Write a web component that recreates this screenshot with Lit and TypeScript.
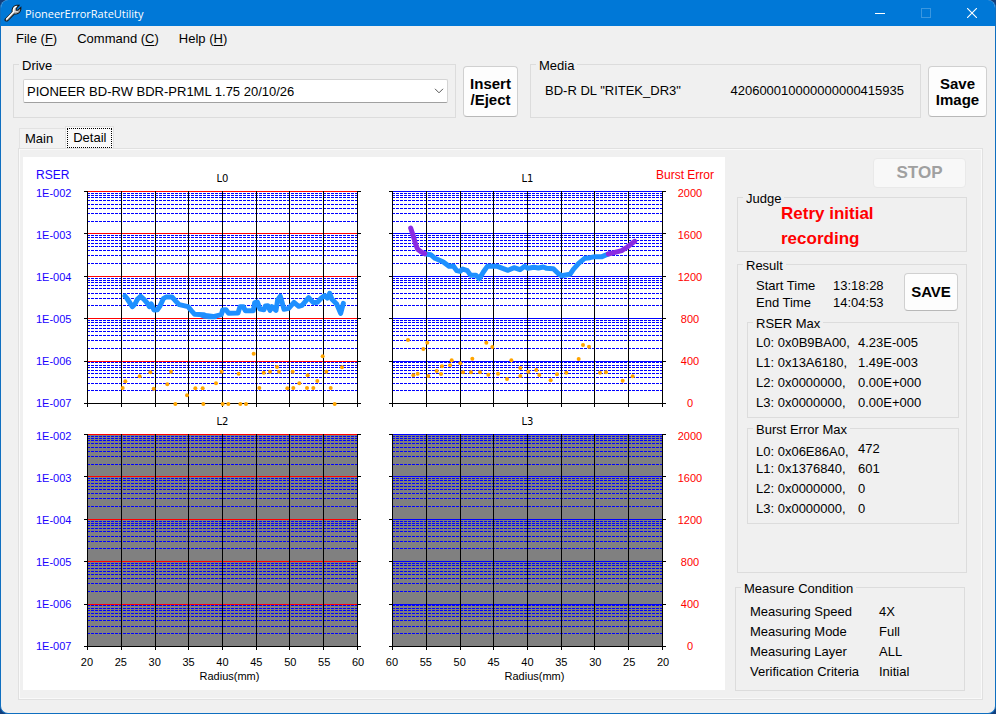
import { LitElement, html, svg, css } from "lit";
import { customElement, property } from "lit/decorators.js";

type Point = [number, number];

interface Trace {
  color: string;
  points: Point[];
}

/* Samples are recorded in thirds of a pixel; dx moves a block of samples
   from its own origin to the chart's origin. */
const block = (dx: number, samples: Point[]): Point[] =>
  samples.map(([x, y]) => [(x + dx) / 3, (y - 108) / 3]);

const BLUE = "#1e90ff";
const VIOLET = "#8a2be2";

const L0_TRACES: Trace[] = [
  {
    color: BLUE,
    points: [
      ...block(-192, [
        [315, 438], [320, 444], [328, 456], [337, 470], [345, 462], [352, 448], [362, 439], [372, 448],
        [384, 462], [388, 470], [394, 462], [402, 480], [412, 479], [420, 468], [430, 446], [438, 441],
        [456, 441], [466, 452], [478, 464], [504, 470], [514, 482], [524, 493], [550, 494], [565, 500],
        [585, 500],
      ]),
      ...block(348, [
        [0, 494], [14, 499], [40, 500], [64, 494], [68, 480], [78, 479], [86, 490], [114, 489], [120, 470],
        [130, 470], [136, 482], [160, 482], [164, 458], [172, 456], [180, 477], [192, 479], [196, 468],
        [204, 467], [210, 481], [216, 470], [228, 481], [233, 450], [241, 439], [246, 456], [252, 478],
        [266, 475], [282, 457], [296, 469], [306, 466], [326, 443], [340, 458], [352, 457], [364, 444],
        [374, 437], [382, 444], [389, 430], [396, 448], [410, 462], [422, 490], [430, 460],
      ]),
    ],
  },
];

const L0_DOTS: Point[] = [
  ...block(-192, [
    [308, 714], [316, 694], [359, 679], [391, 667], [401, 716], [442, 703], [453, 665], [466, 762],
    [501, 736], [526, 715], [548, 715], [550, 762], [588, 700], [605, 665],
  ]),
  ...block(348, [
    [68, 762], [85, 762], [116, 671], [121, 762], [138, 762], [161, 611], [178, 714], [191, 668],
    [210, 665], [231, 651], [237, 665], [262, 715], [280, 714], [278, 665], [298, 700], [321, 714],
    [323, 676], [340, 714], [352, 693], [368, 619], [379, 665], [392, 714], [404, 762], [426, 652],
  ]),
];

const L1_TRACES: Trace[] = [
  {
    color: BLUE,
    points: [
      ...block(-27, [
        [134, 311], [152, 314], [165, 325], [190, 336], [207, 349], [220, 348], [230, 362], [240, 364],
        [248, 357], [262, 362], [272, 376], [288, 376], [298, 386], [310, 366], [322, 349], [352, 349],
        [384, 361], [402, 353], [420, 359], [434, 349], [444, 355], [462, 352], [475, 354], [490, 351],
        [500, 355],
      ]),
      ...block(453, [
        [40, 356], [54, 370], [64, 377], [90, 373], [100, 358], [116, 340], [134, 325], [150, 323],
        [165, 320], [186, 320], [205, 312],
      ]),
    ],
  },
  {
    color: VIOLET,
    points: block(-27, [[92, 234], [100, 258], [106, 280], [113, 298], [124, 306], [134, 311]]),
  },
  {
    color: VIOLET,
    points: block(453, [[205, 312], [225, 307], [245, 302], [262, 291], [284, 274]]),
  },
];

const L1_DOTS: Point[] = [
  ...block(-27, [
    [84, 570], [142, 578], [130, 597], [100, 676], [113, 671], [145, 678], [170, 663], [183, 672],
    [186, 649], [210, 646], [215, 631], [241, 640], [249, 667], [273, 667], [277, 626], [300, 667],
    [319, 578], [337, 591], [325, 674], [354, 671], [381, 687], [394, 631], [421, 654], [421, 678],
    [445, 665], [469, 660], [478, 675], [512, 691], [531, 673],
  ]),
  ...block(453, [
    [79, 668], [116, 627], [129, 585], [147, 590], [180, 668], [198, 667], [248, 692], [278, 679],
  ]),
];

const RSER_SCALE = ["1E-002", "1E-003", "1E-004", "1E-005", "1E-006", "1E-007"];
const BURST_SCALE = ["2000", "1600", "1200", "800", "400", "0"];
const RADII = [20, 25, 30, 35, 40, 45, 50, 55, 60];

const RSER_MAX = [
  ["L0: 0x0B9BA00,", "4.23E-005"],
  ["L1: 0x13A6180,", "1.49E-003"],
  ["L2: 0x0000000,", "0.00E+000"],
  ["L3: 0x0000000,", "0.00E+000"],
];
const BURST_MAX = [
  ["L0: 0x06E86A0,", "472"],
  ["L1: 0x1376840,", "601"],
  ["L2: 0x0000000,", "0"],
  ["L3: 0x0000000,", "0"],
];
const CONDITIONS = [
  ["Measuring Speed", "4X"],
  ["Measuring Mode", "Full"],
  ["Measuring Layer", "ALL"],
  ["Verification Criteria", "Initial"],
];

@customElement("log-chart")
export class LogChart extends LitElement {
  @property() label = "";
  @property() major = "#ff0000";
  @property() fill = "#ffffff";
  @property({ attribute: false }) traces: Trace[] = [];
  @property({ attribute: false }) dots: Point[] = [];

  static styles = css`
    :host {
      display: block;
      width: 277px;
      height: 222px;
      justify-self: center;
    }
    .plot {
      display: block;
    }
    .crisp {
      shape-rendering: crispEdges;
    }
  `;

  render() {
    const decades = [0, 42, 85, 127, 170, 212].map((y) => y + 5.5);
    const columns = [0, 34, 68, 101, 135, 169, 202, 236, 270].map((x) => x + 3.5);
    const minors: number[] = [];
    for (let d = 0; d < 5; d++) {
      for (let k = 2; k < 10; k++) {
        minors.push(Math.round(4.9 + 42.4 * (d + 1 - Math.log10(k))) + 0.5);
      }
    }
    return html`<svg class="plot" width="277" height="222" viewBox="0 0 277 222" role="img" aria-label=${this.label}>
      <g class="crisp" fill="none" stroke-width="1">
        <rect x="3" y="5" width="271" height="213" fill=${this.fill}></rect>
        ${minors.map((y) => svg`<path d="M3 ${y}H274" stroke="#0000ff" stroke-dasharray="3 1"></path>`)}
        ${decades.slice(0, 5).map((y) => svg`<path d="M3 ${y}H274" stroke=${this.major}></path>`)}
        ${decades.map((y) => svg`<path d="M0 ${y}H4M273 ${y}H277" stroke="#000"></path>`)}
        ${columns.map((x) => svg`<path d="M${x} 5V221" stroke="#000"></path>`)}
        <path d="M0 217.5H277" stroke="#000"></path>
      </g>
      ${this.traces.map(
        (t) => svg`<polyline points=${t.points.map((p) => p.join(",")).join(" ")} fill="none"
          stroke=${t.color} stroke-width="5" stroke-linejoin="round" stroke-linecap="round"></polyline>`
      )}
      ${this.dots.map(([x, y]) => svg`<circle cx=${x} cy=${y} r="2" fill="#ffa500"></circle>`)}
    </svg>`;
  }
}

@customElement("app-root")
export class AppRoot extends LitElement {
  static styles = css`
    :host {
      display: block;
      background: #123f7d;
      font: 13px/16px "Liberation Sans", Arial, sans-serif;
      color: #000;
    }
    * {
      box-sizing: border-box;
    }
    .window {
      display: flex;
      flex-direction: column;
      min-height: 100vh;
      border: solid #0f6fc0;
      border-width: 0 1px 1px;
      border-radius: 8px;
      overflow: hidden;
      background: #f0f0f0;
    }
    .titlebar {
      display: flex;
      align-items: center;
      height: 26px;
      padding-left: 3px;
      background: #0078d7;
      color: #fff;
    }
    .title {
      flex: 1;
      margin: 2px 0 0 3px;
      font: 11px/16px "Open Sans", "Noto Sans", sans-serif;
    }
    .caption {
      display: grid;
      place-items: center;
      width: 46px;
      height: 26px;
      padding: 0;
      border: 0;
      background: none;
    }
    .menu {
      display: flex;
      gap: 20px;
      padding: 4px 15px;
    }
    .menu-item {
      padding: 0;
      border: 0;
      background: none;
      font: inherit;
      line-height: 18px;
      color: inherit;
    }
    .key {
      text-decoration: underline;
      text-underline-offset: 2px;
    }
    .group {
      min-width: 0;
      margin: 0;
      padding: 0 8px 8px;
      border: 1px solid #dcdcdc;
    }
    .legend {
      height: 13px;
      margin-left: -3px;
      padding: 0 3px;
      line-height: 15px;
    }
    .push {
      padding: 0;
      border: 1px solid #d0d0d0;
      border-bottom-color: #b8b8b8;
      border-radius: 4px;
      background: #fdfdfd;
      font: bold 15px/16px "Liberation Sans", Arial, sans-serif;
      color: #000;
    }
    .push:disabled {
      border-color: #e9e9e9;
      background: #f8f8f8;
      color: #a0a0a0;
    }
    .toolbar {
      display: flex;
      align-items: flex-end;
      padding: 6px 8px 0 12px;
    }
    .tool {
      height: 51px;
      margin-bottom: 1px;
    }
    .drive {
      flex: 443 1 443px;
      height: 60px;
      margin-right: 7px;
    }
    .media {
      flex: 391 1 391px;
      height: 60px;
      margin: 0 7px 0 12px;
    }
    .insert {
      width: 55px;
    }
    .image {
      width: 59px;
    }
    .picker {
      position: relative;
      margin: 0 -1px 0 1px;
      padding-top: 8px;
    }
    .drive-select {
      display: block;
      width: 100%;
      height: 24px;
      padding: 1px 28px 0 3px;
      appearance: none;
      border: 1px solid #d4d4d4;
      border-bottom-color: #a0a0a0;
      border-radius: 2px;
      background: #fff;
      font: inherit;
      color: #000;
    }
    .chevron {
      position: absolute;
      right: 4px;
      bottom: 9px;
      pointer-events: none;
    }
    .media-info {
      display: flex;
      justify-content: space-between;
      padding: 12px 8px 0 6px;
    }
    .tabs {
      display: flex;
      align-items: flex-end;
      padding: 8px 0 0 18px;
      height: 30px;
    }
    .tab {
      height: 20px;
      padding: 0 12px 0 5px;
      border: 1px solid #e2e2e2;
      border-width: 1px 0 0 1px;
      background: #f2f2f2;
      font: inherit;
      line-height: 16px;
      color: inherit;
    }
    .tab.active {
      height: 22px;
      padding: 0 1px;
      border-width: 1px 1px 0;
      background: #f9f9f9;
    }
    .focus {
      display: block;
      height: 20px;
      padding: 1px 5px;
      border: 1px dotted #000;
    }
    .page {
      flex: 1;
      display: flex;
      align-items: flex-start;
      gap: 12px;
      margin: 0 12px 13px 17px;
      padding: 8px 15px 8px 4px;
      border: 1px solid #e0e0e0;
      box-shadow: inset 0 0 0 1px #f9f9f9;
    }
    .panel {
      flex: 1;
      display: grid;
      grid-template-columns: 61px minmax(277px, 1fr) 28px minmax(277px, 1fr) 59px;
      grid-template-rows: 29px 222px 21px 222px auto;
      padding-bottom: 7px;
      background: #fff;
    }
    .unit {
      align-self: center;
      font-size: 12px;
      line-height: 14px;
      white-space: nowrap;
    }
    .unit.left {
      padding: 6px 0 0 13px;
      color: #2000ff;
    }
    .unit.right {
      justify-self: end;
      padding: 6px 11px 0 0;
      color: #f00;
    }
    .layer {
      align-self: end;
      text-align: center;
      font: 10px/14px "DejaVu Sans", sans-serif;
    }
    .scale {
      display: flex;
      flex-direction: column;
      gap: 28px;
      font-size: 11px;
      line-height: 14px;
      white-space: nowrap;
    }
    .scale.rser {
      padding-left: 13px;
      color: #2000ff;
    }
    .scale.burst {
      padding-right: 11px;
      color: #f00;
      text-align: center;
    }
    .radius {
      justify-self: center;
      width: 305px;
      margin: 0 -14px;
      padding-top: 4px;
      font-size: 11px;
      line-height: 14px;
      text-align: center;
    }
    .ticks {
      display: grid;
      grid-template-columns: repeat(9, 1fr);
    }
    .radius-name {
      margin: 0;
      padding-left: 14px;
    }
    .side {
      flex: 0 0 230px;
      display: flex;
      flex-direction: column;
    }
    .stop {
      align-self: flex-end;
      width: 93px;
      height: 30px;
      margin: 1px 1px 3px 0;
      font-size: 17px;
    }
    .judge {
      height: 61px;
      padding: 0 8px;
    }
    .verdict {
      width: 120px;
      margin: -3px 0 0 35px;
      font-size: 17px;
      font-weight: bold;
      line-height: 25px;
      color: #f00;
    }
    .result {
      height: 315px;
      margin-top: 6px;
    }
    .times {
      display: flex;
      align-items: flex-end;
      justify-content: space-between;
      margin: 2px 0 5px;
      padding-left: 10px;
      line-height: 17px;
    }
    .stamps {
      display: grid;
      grid-template-columns: 77px auto;
    }
    .save {
      width: 54px;
      height: 38px;
    }
    .max {
      height: 102px;
      padding: 4px 8px 0;
      margin: 0 -1px 4px 1px;
    }
    .readings {
      border-collapse: collapse;
    }
    .name,
    .value {
      height: 20px;
      padding: 0;
      text-align: left;
      font-weight: normal;
      line-height: 14px;
      white-space: nowrap;
    }
    .name {
      min-width: 102px;
    }
    .late .readings tr:first-child .name {
      vertical-align: bottom;
    }
    .condition {
      height: 110px;
      margin: 8px 2px 0 -2px;
      padding: 8px 8px 0;
    }
    .condition .readings {
      margin-left: 6px;
    }
    .condition .name {
      min-width: 129px;
    }
  `;

  private readings(rows: string[][]) {
    return html`<table class="readings">
      ${rows.map(([name, value]) => html`<tr><th class="name" scope="row">${name}</th><td class="value">${value}</td></tr>`)}
    </table>`;
  }

  private scale(kind: string, labels: string[]) {
    return html`<div class="scale ${kind}">${labels.map((l) => html`<span>${l}</span>`)}</div>`;
  }

  private radius(values: number[]) {
    return html`<div class="radius">
      <div class="ticks">${values.map((v) => html`<span>${v}</span>`)}</div>
      <p class="radius-name">Radius(mm)</p>
    </div>`;
  }

  render() {
    return html`
      <div class="window">
        <header class="titlebar">
          <svg width="18" height="18" viewBox="0 0 18 18" aria-hidden="true">
            <path d="M1 15.5 8.3 8.2C7.6 5 9 1.8 12.5 1.2H15L12.2 4.4V6.2H14L16.8 3.6V5.4C16.2 8.8 13.4 10.4 10.4 9.8L3.6 16.8C2.2 17.4.6 16.8 1 15.5Z" fill="#d8d8d8" stroke="#151515" stroke-width="1.1"></path>
            <path d="M2.3 15.2 9.5 7.8C8.8 5 10.4 2.8 12.6 2.3" fill="none" stroke="#fff" stroke-width="1.3"></path>
            <path d="M3.4 15.8 10.2 8.9C12.6 9.3 14.8 8.2 15.7 6.2" fill="none" stroke="#999" stroke-width="1"></path>
          </svg>
          <h1 class="title">PioneerErrorRateUtility</h1>
          <button class="caption" aria-label="Minimize">
            <svg width="10" height="10" viewBox="0 0 10 10"><path d="M0 5.5H10" stroke="#fff"></path></svg>
          </button>
          <button class="caption" aria-label="Maximize" disabled>
            <svg width="10" height="10" viewBox="0 0 10 10"><rect x=".5" y=".5" width="9" height="9" fill="none" stroke="#3a97e0"></rect></svg>
          </button>
          <button class="caption" aria-label="Close">
            <svg width="10" height="10" viewBox="0 0 10 10"><path d="M0 0 10 10M10 0 0 10" stroke="#fff" stroke-width="1.1"></path></svg>
          </button>
        </header>

        <nav class="menu">
          <button class="menu-item">File (<span class="key">F</span>)</button>
          <button class="menu-item">Command (<span class="key">C</span>)</button>
          <button class="menu-item">Help (<span class="key">H</span>)</button>
        </nav>

        <div class="toolbar">
          <fieldset class="group drive">
            <legend class="legend">Drive</legend>
            <div class="picker">
              <select class="drive-select" aria-label="Drive">
                <option>PIONEER BD-RW BDR-PR1ML 1.75 20/10/26</option>
              </select>
              <svg class="chevron" width="10" height="6" viewBox="0 0 10 6" aria-hidden="true">
                <path d="M1 .8 5 4.8 9 .8" fill="none" stroke="#555"></path>
              </svg>
            </div>
          </fieldset>
          <button class="push tool insert">Insert<br />/Eject</button>
          <fieldset class="group media">
            <legend class="legend">Media</legend>
            <div class="media-info">
              <span>BD-R DL "RITEK_DR3"</span>
              <span>420600010000000000415935</span>
            </div>
          </fieldset>
          <button class="push tool image">Save<br />Image</button>
        </div>

        <div class="tabs" role="tablist">
          <button class="tab" role="tab" aria-selected="false">Main</button>
          <button class="tab active" role="tab" aria-selected="true"><span class="focus">Detail</span></button>
        </div>

        <main class="page">
          <section class="panel">
            <span class="unit left">RSER</span>
            <span class="layer">L0</span>
            <span></span>
            <span class="layer">L1</span>
            <span class="unit right">Burst Error</span>

            ${this.scale("rser", RSER_SCALE)}
            <log-chart label="L0" .traces=${L0_TRACES} .dots=${L0_DOTS}></log-chart>
            <span></span>
            <log-chart label="L1" major="#0000ff" .traces=${L1_TRACES} .dots=${L1_DOTS}></log-chart>
            ${this.scale("burst", BURST_SCALE)}

            <span></span>
            <span class="layer">L2</span>
            <span></span>
            <span class="layer">L3</span>
            <span></span>

            ${this.scale("rser", RSER_SCALE)}
            <log-chart label="L2" fill="#808080"></log-chart>
            <span></span>
            <log-chart label="L3" major="#0000ff" fill="#808080"></log-chart>
            ${this.scale("burst", BURST_SCALE)}

            <span></span>
            ${this.radius(RADII)}
            <span></span>
            ${this.radius([...RADII].reverse())}
          </section>

          <aside class="side">
            <button class="push stop" disabled>STOP</button>

            <fieldset class="group judge">
              <legend class="legend">Judge</legend>
              <p class="verdict">Retry initial recording</p>
            </fieldset>

            <fieldset class="group result">
              <legend class="legend">Result</legend>
              <div class="times">
                <div class="stamps">
                  <span>Start Time</span><span>13:18:28</span>
                  <span>End Time</span><span>14:04:53</span>
                </div>
                <button class="push save">SAVE</button>
              </div>
              <fieldset class="group max">
                <legend class="legend">RSER Max</legend>
                ${this.readings(RSER_MAX)}
              </fieldset>
              <fieldset class="group max late">
                <legend class="legend">Burst Error Max</legend>
                ${this.readings(BURST_MAX)}
              </fieldset>
            </fieldset>

            <fieldset class="group condition">
              <legend class="legend">Measure Condition</legend>
              ${this.readings(CONDITIONS)}
            </fieldset>
          </aside>
        </main>
      </div>
    `;
  }
}
